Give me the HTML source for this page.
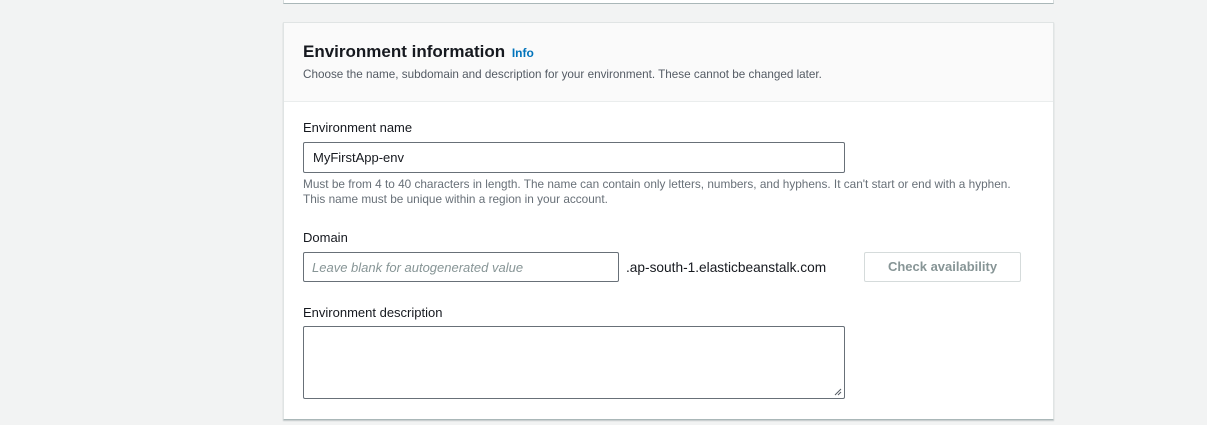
<!DOCTYPE html>
<html><head><meta charset="utf-8"><style>
*{box-sizing:border-box;margin:0;padding:0}
body{width:1207px;height:425px;background:#f2f3f3;font-family:"Liberation Sans",Arial,sans-serif;color:#16191f;position:relative;overflow:hidden}
.top{position:absolute;left:283px;top:-10px;width:771px;height:14px;background:#fff;border:1px solid #d5dbdb;border-bottom:1px solid #aab7b8}
.card{position:absolute;left:283px;top:22px;width:771px;height:398px;background:#fff;border:1px solid #e0e4e4;border-bottom:1px solid #aab7b8;box-shadow:0 1px 1px rgba(0,28,36,.2)}
.hdr{height:79px;background:#fafafa;border-bottom:1px solid #eaeded;padding:18px 19px 0}
h2{font-size:17px;font-weight:bold;line-height:22px}
h2 a{color:#0073bb;font-size:12px;margin-left:2px;font-weight:bold}
.desc{font-size:11.7px;color:#545b64;margin-top:4px}
.abs{position:absolute}
.lbl{font-size:13px}
.inp{border:1px solid #687078;border-radius:2px;background:#fff}
.hint{font-size:11.8px;color:#687078;line-height:15px}
</style></head><body>
<div class="top"></div>
<div class="card">
<div class="hdr"><h2>Environment information <a>Info</a></h2><div class="desc">Choose the name, subdomain and description for your environment. These cannot be changed later.</div></div>
</div>
<div class="abs lbl" style="left:303px;top:120px">Environment name</div>
<div class="abs inp" style="left:303px;top:142px;width:542px;height:31px;padding:7px 9px;font-size:13px">MyFirstApp-env</div>
<div class="abs hint" style="left:303px;top:177px">Must be from 4 to 40 characters in length. The name can contain only letters, numbers, and hyphens. It can't start or end with a hyphen.<br>This name must be unique within a region in your account.</div>
<div class="abs lbl" style="left:303px;top:230px">Domain</div>
<div class="abs inp" style="left:303px;top:252px;width:316px;height:30px;padding:7px 8px;font-size:13px;color:#879596;font-style:italic">Leave blank for autogenerated value</div>
<div class="abs" style="left:626px;top:260px;font-size:13.7px">.ap-south-1.elasticbeanstalk.com</div>
<div class="abs" style="left:864px;top:252px;width:157px;height:30px;border:1px solid #d5dbdb;border-radius:2px;text-align:center;line-height:28px;font-size:13px;font-weight:bold;color:#879596">Check availability</div>
<div class="abs lbl" style="left:303px;top:305px">Environment description</div>
<div class="abs inp" style="left:303px;top:326px;width:542px;height:73px">
<svg style="position:absolute;right:2px;bottom:2px" width="8" height="8"><path d="M1 7L7 1M4 7L7 4" stroke="#545b64" stroke-width="1"/></svg>
</div>
</body></html>
